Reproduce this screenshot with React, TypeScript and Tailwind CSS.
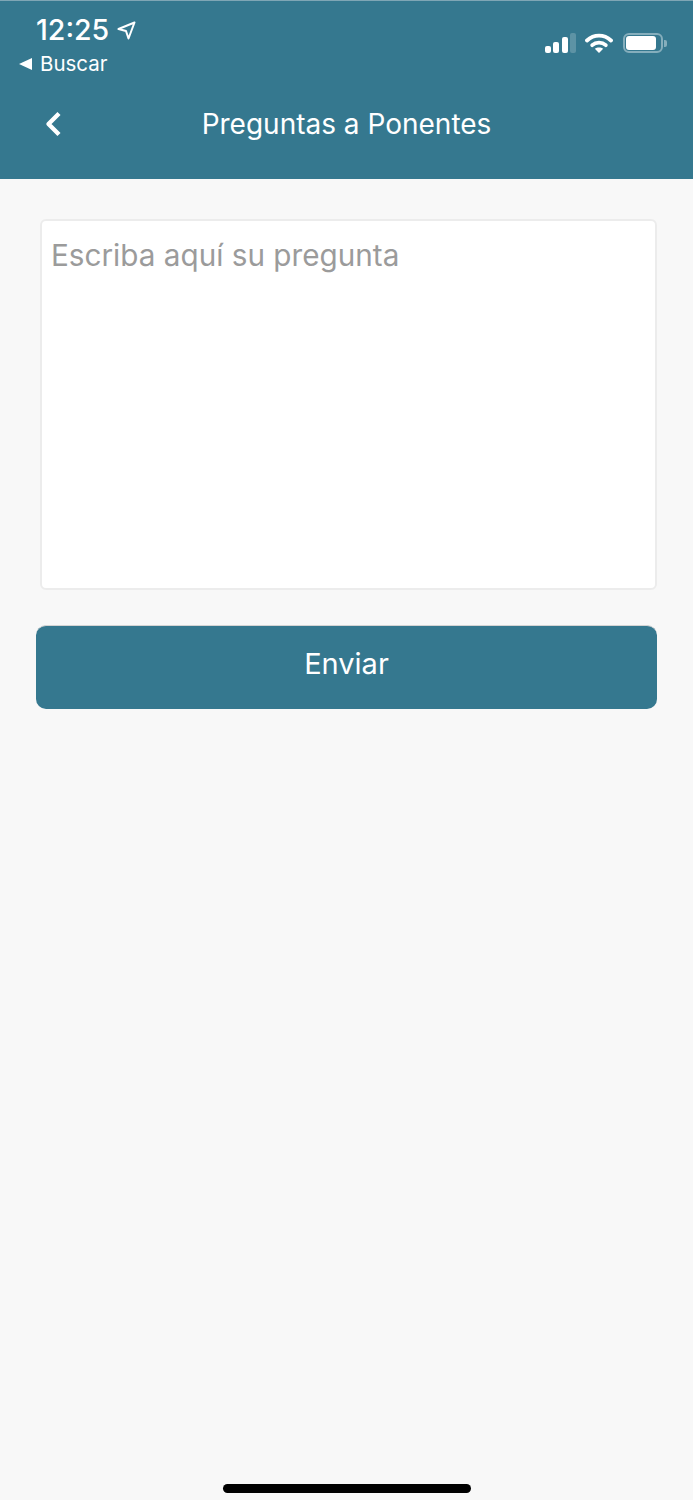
const inter = { fontFamily: "Inter, sans-serif" }

function StatusIcons() {
  return (
    <div className="flex items-center gap-[9px]">
      {/* signal */}
      <div className="flex items-end gap-[2.5px] h-[20px]">
        <div className="w-[6px] h-[7px] rounded-[2px] bg-white" />
        <div className="w-[6px] h-[11px] rounded-[2px] bg-white" />
        <div className="w-[6px] h-[16px] rounded-[2px] bg-white" />
        <div className="w-[6px] h-[20px] rounded-[2px] bg-white/20" />
      </div>
      {/* wifi */}
      <svg width="28" height="20" viewBox="0 0 28 20" fill="none">
        <path d="M2 7.5C9 1 19 1 26 7.5" stroke="white" strokeWidth="3.8" strokeLinecap="round" />
        <path d="M7.2 12.2C11 8.8 17 8.8 20.8 12.2" stroke="white" strokeWidth="3.8" strokeLinecap="round" />
        <path d="M14 20L9.8 15.8C12.2 14 15.8 14 18.2 15.8Z" fill="white" />
      </svg>
      {/* battery */}
      <div className="flex items-center gap-[1px] ml-[1px]">
        <div className="w-[40px] h-[20px] rounded-[6px] border-2 border-white/40 p-[1px]">
          <div className="w-[30px] h-full rounded-[3px] bg-white" />
        </div>
        <div className="w-[3px] h-[7px] rounded-r-[2px] bg-white/40" />
      </div>
    </div>
  )
}

export default function App() {
  return (
    <div className="min-h-[1500px] flex flex-col bg-[#f8f8f8]" style={inter}>
      {/* Header */}
      <header className="h-[179px] bg-[#35788f] border-t border-[#7fa6b5] text-white shrink-0">
        <div className="flex justify-between pr-[26px]">
          <div>
            <div className="flex items-center gap-[8px] pl-[36px] pt-[12px] h-[46px]">
              <span className="text-[28.5px] leading-[34px] font-medium">12:25</span>
              <svg width="19" height="19" viewBox="0 0 19 19" fill="none" className="mt-[1px]">
                <path d="M17.5 1.5L1.5 8L9 10L11.5 17.5Z" stroke="white" strokeWidth="2" strokeLinejoin="round" />
              </svg>
            </div>
            <div className="flex items-center gap-[8px] pl-[19px] h-[34px]">
              <div className="w-0 h-0 border-y-[6.5px] border-y-transparent border-r-[13px] border-r-white" />
              <span className="text-[20.5px] leading-[24px]">Buscar</span>
            </div>
          </div>
          <div className="pt-[32px]">
            <StatusIcons />
          </div>
        </div>
        <div className="flex items-center h-[50px] mt-[18px] relative">
          <svg width="20" height="28" viewBox="0 0 20 28" fill="none" className="absolute left-[43px]">
            <path d="M16 3.5L5.5 14L16 24.5" stroke="white" strokeWidth="4.4" strokeLinejoin="round" />
          </svg>
          <h1 className="w-full text-center text-[28px] leading-[34px] font-normal">
            Preguntas a Ponentes
          </h1>
        </div>
      </header>

      {/* Form */}
      <main className="flex flex-col pl-[36px] pr-[36px] pt-[40px]">
        <div className="ml-[4px] h-[371px] rounded-[6px] bg-white border-2 border-[#ececec] pl-[9px] pt-[16px]">
          <p className="text-[29.7px] leading-[36px] text-[#9b9b9b]">Escriba aquí su pregunta</p>
        </div>
        <button className="mt-[35px] h-[84px] pb-[8px] rounded-[10px] bg-[#35788f] border-t border-[#d4d4d4] text-white text-[29px] text-center">
          Enviar
        </button>
      </main>

      {/* Home indicator */}
      <div className="mt-auto flex justify-center pb-[7px]">
        <div className="w-[248px] h-[9px] rounded-full bg-black" />
      </div>
    </div>
  )
}
